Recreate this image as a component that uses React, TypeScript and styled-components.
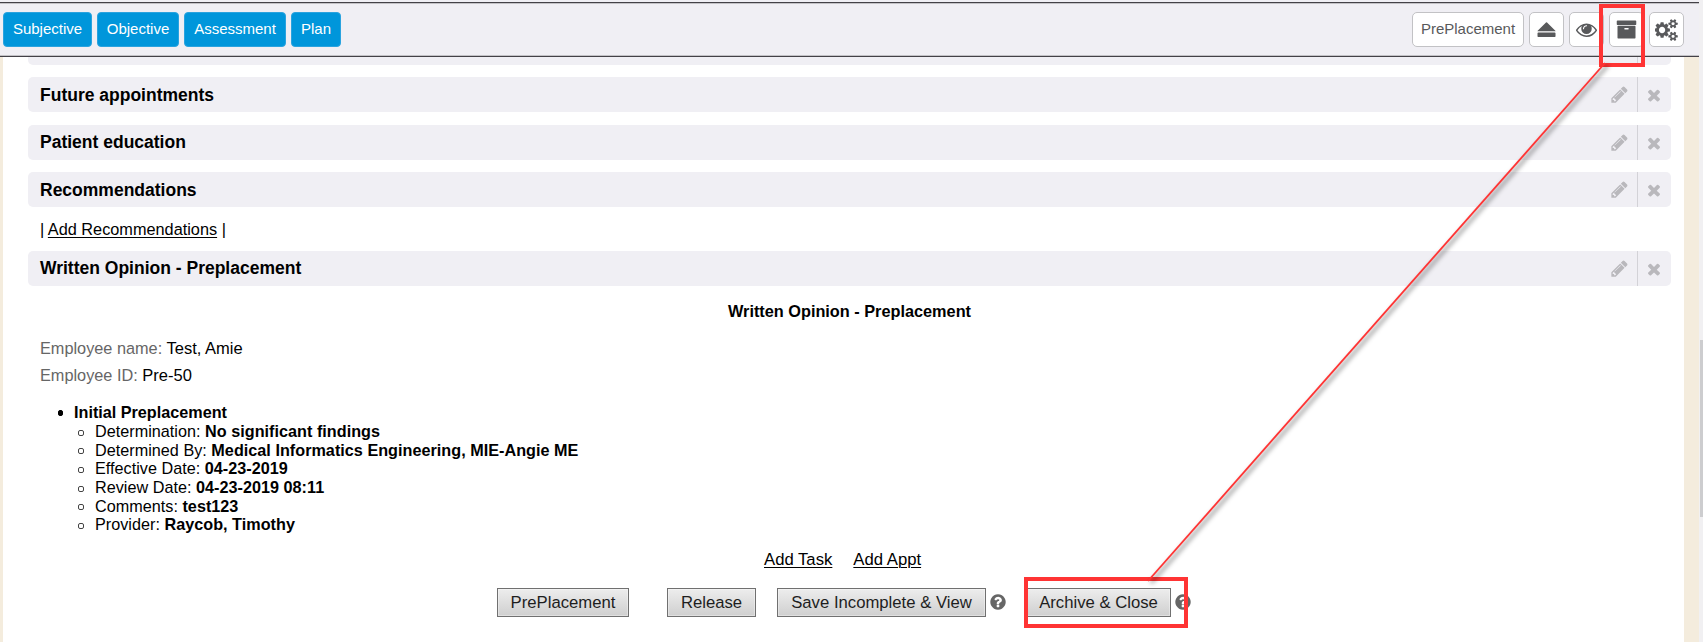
import React from "react";
import styled, { createGlobalStyle, css } from "styled-components";

const GlobalStyle = createGlobalStyle`
  * { box-sizing: border-box; }
  html, body { margin: 0; padding: 0; }
  body {
    font-family: "Liberation Sans", Arial, sans-serif;
    font-size: 16px;
    color: #000;
    background: #fff;
    overflow: hidden;
  }
`;

const Screen = styled.div`
  position: relative;
  display: flex;
  width: 1703px;
  height: 642px;
  overflow: hidden;
  background: #f0eff4;
`;

const Main = styled.div`
  display: flex;
  flex-direction: column;
  width: 1699px;
  height: 642px;
`;

const ScrollTrack = styled.div`
  width: 4px;
  padding: 340px 0 0 1px;
  background: #f1f0f2;
`;

const ScrollThumb = styled.div`
  height: 177px;
  background: #cdcdcf;
`;

const Toolbar = styled.header`
  flex: none;
  display: flex;
  justify-content: space-between;
  align-items: flex-start;
  height: 55px;
  margin-top: 2px;
  padding: 8px 15px 0 3px;
  background: #f0eff4;
  border-top: 1px solid #434147;
  border-bottom: 1px solid #434147;
  box-shadow: inset 0 1px 0 #c3c2c6, inset 0 -1px 0 #c3c2c6;
`;

const ButtonGroup = styled.div`
  display: flex;
  gap: 5px;
  padding-top: 1px;
`;

const NavButton = styled.button<{ $width: number }>`
  width: ${(p) => p.$width}px;
  height: 35px;
  padding: 0 0 2px;
  border: 1px solid #2aa3df;
  border-radius: 4px;
  background: #0096db;
  color: #fff;
  font: 15px "Liberation Sans", Arial, sans-serif;
  white-space: nowrap;
`;

const ToolButton = styled.button<{ $width?: number }>`
  display: flex;
  align-items: center;
  justify-content: center;
  width: ${(p) => p.$width ?? 35}px;
  height: 35px;
  padding: 0;
  border: 1px solid #c2c2c5;
  border-radius: 5px;
  background: #fff;
  color: #58595b;
  font: 15px "Liberation Sans", Arial, sans-serif;

  span { padding-bottom: 2px; }
`;

const Body = styled.main`
  flex: 1;
  min-height: 0;
  padding: 0 13px 0 25px;
  background: #fff;
  border-left: 3px solid #f4ecdd;
  border-right: 15px solid #f4ecdd;
  overflow: hidden;
`;

const SectionBar = styled.section<{ $gap: number; $clipped?: boolean }>`
  display: flex;
  height: 35px;
  margin-top: ${(p) => p.$gap}px;
  border-radius: 5px;
  background: #f0eff4;
  ${(p) => p.$clipped && css`
    height: 8px;
    border-radius: 0 0 5px 5px;
  `}
`;

const SectionTitle = styled.h2<{ $lift?: number }>`
  flex: 1;
  margin: 0;
  padding-left: 12px;
  font-size: 17.5px;
  line-height: ${(p) => 37 - (p.$lift ?? 0)}px;
`;

const SectionAction = styled.div<{ $width: number; $divided?: boolean }>`
  display: flex;
  align-items: center;
  justify-content: center;
  width: ${(p) => p.$width}px;
  padding-right: ${(p) => (p.$divided ? 1 : 0)}px;
  color: #b9b8bc;
  border-left: ${(p) => (p.$divided ? "1px solid #d3d2d7" : "none")};
`;

const Link = styled.a`
  color: #000;
  text-decoration: underline;
  text-underline-offset: 2px;
  text-decoration-thickness: 1px;
`;

const AddLine = styled.div`
  height: 44px;
  padding-left: 12px;
  line-height: 44px;
  font-size: 16.3px;
`;

const DocumentTitle = styled.h3`
  margin: 16px 0 0;
  font-size: 16.3px;
  line-height: 18px;
  text-align: center;
`;

const FieldList = styled.div`
  padding: 15px 0 0 12px;
  font-size: 16.5px;
  line-height: 27px;
`;

const FieldLabel = styled.span`
  color: #666;
  font-size: 16.3px;
`;

const Findings = styled.ul`
  margin: 0;
  padding: 14px 0 0 29px;
  list-style: none;
  font-size: 16.2px;
`;

const Finding = styled.li<{ $nested?: boolean; $height: number }>`
  display: flex;
  align-items: center;
  gap: 11px;
  height: ${(p) => p.$height}px;
  padding-left: ${(p) => (p.$nested ? 22 : 1)}px;
  white-space: pre;

  &::before {
    content: "";
    flex: none;
    width: ${(p) => (p.$nested ? 4 : 3)}px;
    height: 4px;
    margin: ${(p) => (p.$nested ? "2px -1px 0 -1px" : "0")};
    border: 1px solid ${(p) => (p.$nested ? "#444" : "#000")};
    border-radius: 2px;
    background: ${(p) => (p.$nested ? "#fff" : "#000")};
  }
`;

const FindingText = styled.span`
  letter-spacing: 0.02px;
  padding-left: 1px;
`;

const LinkRow = styled.div`
  display: flex;
  gap: 21px;
  padding: 16px 0 0 736px;
  line-height: 20px;
  font-size: 16.7px;
`;

const FormRow = styled.div`
  display: flex;
  align-items: center;
  padding: 18px 0 0 469px;
  color: #666;
`;

const FormButton = styled.button<{ $width: number; $gap?: number }>`
  width: ${(p) => p.$width}px;
  height: 29px;
  margin-left: ${(p) => p.$gap ?? 0}px;
  padding: 1px 0 0;
  border: 1px solid #707070;
  border-radius: 0;
  background: linear-gradient(#ededed, #cfcfcf);
  box-shadow: inset 0 0 0 1px rgba(255, 255, 255, 0.35);
  color: #1e1e1e;
  font: 16.7px "Liberation Sans", Arial, sans-serif;
  white-space: nowrap;
`;

const HelpSlot = styled.span`
  display: flex;
  margin: -2px 0 0 3px;
`;

const Annotation = styled.svg`
  position: absolute;
  top: 0;
  left: 0;
  pointer-events: none;
`;

const iconPaths = {
  pencil:
    "M491 1536l91-91-235-235-91 91v107h128v128h107zm523-928q0-22-22-22-10 0-17 7l-542 542q-7 7-7 17 0 22 22 22 10 0 17-7l542-542q7-7 7-17zm-54-192l416 416-832 832h-416v-416zm683 96q0 53-37 90l-166 166-416-416 166-165q36-38 90-38 53 0 91 38l235 234q37 39 37 91z",
  times:
    "M1490 1322q0 40-28 68l-136 136q-28 28-68 28t-68-28l-294-294-294 294q-28 28-68 28t-68-28l-136-136q-28-28-28-68t28-68l294-294-294-294q-28-28-28-68t28-68l136-136q28-28 68-28t68 28l294 294 294-294q28-28 68-28t68 28l136 136q28 28 28 68t-28 68l-294 294 294 294q28 28 28 68z",
  eject:
    "M142 1003l710-710q19-19 45-19t45 19l710 710q19 19 13 32t-32 13h-1472q-26 0-32-13t13-32zm1459 533h-1408q-26 0-45-19t-19-45v-256q0-26 19-45t45-19h1408q26 0 45 19t19 45v256q0 26-19 45t-45 19z",
  eye:
    "M1664 960q-152-236-381-353 61 104 61 225 0 185-131.500 316.500t-316.500 131.500-316.500-131.500-131.500-316.500q0-121 61-225-229 117-381 353 133 205 333.500 326.500t434.500 121.500 434.500-121.500 333.500-326.500zm-720-384q0-20-14-34t-34-14q-125 0-214.500 89.500t-89.500 214.500q0 20 14 34t34 14 34-14 14-34q0-86 61-147t147-61q20 0 34-14t14-34zm848 384q0 34-20 69-140 230-376.500 368.500t-499.500 138.500-499.500-139-376.500-368q-20-35-20-69t20-69q140-229 376.500-368t499.500-139 499.500 139 376.500 368q20 35 20 69z",
  archive:
    "M1088 832q0-26-19-45t-45-19h-256q-26 0-45 19t-19 45 19 45 45 19h256q26 0 45-19t19-45zm576-192v960q0 26-19 45t-45 19h-1408q-26 0-45-19t-19-45v-960q0-26 19-45t45-19h1408q26 0 45 19t19 45zm64-448v256q0 26-19 45t-45 19h-1536q-26 0-45-19t-19-45v-256q0-26 19-45t45-19h1536q26 0 45 19t19 45z",
  help:
    "M1024 1376v-192q0-14-9-23t-23-9h-192q-14 0-23 9t-9 23v192q0 14 9 23t23 9h192q14 0 23-9t9-23zm256-672q0-88-55.500-163t-138.500-116-170-41q-243 0-371 213-15 24 8 42l132 100q7 6 19 6 16 0 25-12 53-68 86-92 34-24 86-24 48 0 85.500 26t37.500 59q0 38-20 61t-68 45q-63 28-115.500 86.500t-52.500 125.500v36q0 14 9 23t23 9h192q14 0 23-9t9-23q0-19 21.500-49.500t54.500-49.500q32-18 49-28.500t46-35 44.500-48 28-60.500 12.500-81zm384 192q0 209-103 385.500t-279.500 279.500-385.500 103-385.500-103-279.500-279.500-103-385.500 103-385.500 279.500-279.500 385.500-103 385.500 103 279.500 279.500 103 385.500z",
  cogs:
    "M832 896q0-106-75-181t-181-75-181 75-75 181 75 181 181 75 181-75 75-181zm768 512q0-52-38-90t-90-38-90 38-38 90q0 53 37.500 90.500t90.500 37.500 90.500-37.500 37.500-90.500zm0-1024q0-52-38-90t-90-38-90 38-38 90q0 53 37.500 90.500t90.500 37.500 90.500-37.500 37.500-90.500zm-384 421v185q0 10-7 19.500t-16 10.500l-155 24q-11 35-32 76 34 48 90 115 7 11 7 20 0 12-7 19-23 30-82.500 89.500t-78.500 59.500q-11 0-21-7l-115-90q-37 19-77 31-11 108-23 155-7 24-30 24h-186q-11 0-20-7.500t-10-17.500l-23-153q-34-10-75-31l-118 89q-7 7-20 7-11 0-21-8-144-133-144-160 0-9 7-19 10-14 41-53t47-61q-23-44-35-82l-152-24q-10-1-17-9.500t-7-19.500v-185q0-10 7-19.500t16-10.500l155-24q11-35 32-76-34-48-90-115-7-11-7-20 0-12 7-20 22-30 82-89t79-59q11 0 21 7l115 90q34-18 77-32 11-108 23-154 7-24 30-24h186q11 0 20 7.500t10 17.500l23 153q34 10 75 31l118-89q8-7 20-7 11 0 21 8 144 133 144 160 0 8-7 19-12 16-42 54t-45 60q23 48 34 82l152 23q10 2 17 10.500t7 19.500zm640 533v140q0 16-149 31-12 27-30 52 51 113 51 138 0 4-4 7-122 71-124 71-8 0-46-47t-52-68q-20 2-30 2t-30-2q-14 21-52 68t-46 47q-2 0-124-71-4-3-4-7 0-25 51-138-18-25-30-52-149-15-149-31v-140q0-16 149-31 13-29 30-52-51-113-51-138 0-4 4-7 4-2 35-20t59-34 30-16q8 0 46 46.500t52 67.500q20-2 30-2t30 2q51-71 92-112l6-2q4 0 124 70 4 3 4 7 0 25-51 138 17 23 30 52 149 15 149 31zm0-1024v140q0 16-149 31-12 27-30 52 51 113 51 138 0 4-4 7-122 71-124 71-8 0-46-47t-52-68q-20 2-30 2t-30-2q-14 21-52 68t-46 47q-2 0-124-71-4-3-4-7 0-25 51-138-18-25-30-52-149-15-149-31v-140q0-16 149-31 13-29 30-52-51-113-51-138 0-4 4-7 4-2 35-20t59-34 30-16q8 0 46 46.500t52 67.500q20-2 30-2t30 2q51-71 92-112l6-2q4 0 124 70 4 3 4 7 0 25-51 138 17 23 30 52 149 15 149 31z",
};

function Icon({ name, size }: { name: keyof typeof iconPaths; size: number }) {
  const units = name === "cogs" ? 1920 : 1792;
  return (
    <svg width={(size * units) / 1792} height={size} viewBox={`0 0 ${units} 1792`} fill="currentColor" aria-hidden="true">
      <path d={iconPaths[name]} />
    </svg>
  );
}

function Section({ title, gap, lift }: { title: string; gap: number; lift?: number }) {
  return (
    <SectionBar $gap={gap}>
      <SectionTitle $lift={lift}>{title}</SectionTitle>
      <SectionAction $width={36}>
        <Icon name="pencil" size={19} />
      </SectionAction>
      <SectionAction $width={34} $divided>
        <Icon name="times" size={18} />
      </SectionAction>
    </SectionBar>
  );
}

const findings = [
  { label: "Determination: ", value: "No significant findings", height: 19 },
  { label: "Determined By: ", value: "Medical Informatics Engineering, MIE-Angie ME", height: 18 },
  { label: "Effective Date: ", value: "04-23-2019", height: 19 },
  { label: "Review Date: ", value: "04-23-2019 08:11", height: 19 },
  { label: "Comments: ", value: "test123", height: 18 },
  { label: "Provider: ", value: "Raycob, Timothy", height: 19 },
];

export default function App() {
  return (
    <>
      <GlobalStyle />
      <Screen>
        <Main>
          <Toolbar>
            <ButtonGroup>
              <NavButton $width={89}>Subjective</NavButton>
              <NavButton $width={82}>Objective</NavButton>
              <NavButton $width={102}>Assessment</NavButton>
              <NavButton $width={50}>Plan</NavButton>
            </ButtonGroup>
            <ButtonGroup>
              <ToolButton $width={112}><span>PrePlacement</span></ToolButton>
              <ToolButton aria-label="Eject"><Icon name="eject" size={21} /></ToolButton>
              <ToolButton aria-label="Preview"><Icon name="eye" size={21} /></ToolButton>
              <ToolButton aria-label="Archive"><Icon name="archive" size={21} /></ToolButton>
              <ToolButton aria-label="Settings"><Icon name="cogs" size={22} /></ToolButton>
            </ButtonGroup>
          </Toolbar>
          <Body>
            <SectionBar $gap={0} $clipped>
              <SectionTitle />
              <SectionAction $width={34} $divided />
            </SectionBar>
            <Section title="Future appointments" gap={12} />
            <Section title="Patient education" gap={13} lift={2} />
            <Section title="Recommendations" gap={12} />
            <AddLine>
              | <Link>Add Recommendations</Link> |
            </AddLine>
            <Section title="Written Opinion - Preplacement" gap={0} lift={2} />
            <DocumentTitle>Written Opinion - Preplacement</DocumentTitle>
            <FieldList>
              <div><FieldLabel>Employee name:</FieldLabel> Test, Amie</div>
              <div><FieldLabel>Employee ID:</FieldLabel> Pre-50</div>
            </FieldList>
            <Findings>
              <Finding $height={19}><b>Initial Preplacement</b></Finding>
              {findings.map((f) => (
                <Finding key={f.label} $nested $height={f.height}>
                  <FindingText>{f.label}<b>{f.value}</b></FindingText>
                </Finding>
              ))}
            </Findings>
            <LinkRow>
              <Link>Add Task</Link>
              <Link>Add Appt</Link>
            </LinkRow>
            <FormRow>
              <FormButton $width={132}>PrePlacement</FormButton>
              <FormButton $width={89} $gap={38}>Release</FormButton>
              <FormButton $width={209} $gap={21}>Save Incomplete &amp; View</FormButton>
              <HelpSlot><Icon name="help" size={18} /></HelpSlot>
              <FormButton $width={145} $gap={19}>Archive &amp; Close</FormButton>
              <HelpSlot><Icon name="help" size={18} /></HelpSlot>
            </FormRow>
          </Body>
        </Main>
        <ScrollTrack>
          <ScrollThumb />
        </ScrollTrack>
        <Annotation width="1703" height="642" viewBox="0 0 1703 642" fill="none">
          <defs>
            <filter id="lineShadow" x="-5%" y="-5%" width="110%" height="110%">
              <feGaussianBlur stdDeviation="2" />
            </filter>
          </defs>
          <rect x="1601" y="6" width="42" height="59" stroke="#ff3434" strokeWidth="4" />
          <rect x="1026" y="579" width="160" height="47" stroke="#ff3434" strokeWidth="4" />
          <path d="M1608 65L1151 583" stroke="#000" strokeOpacity="0.3" strokeWidth="4" filter="url(#lineShadow)" />
          <path d="M1605 63L1148 581" stroke="#ff3434" strokeWidth="1.800" />
        </Annotation>
      </Screen>
    </>
  );
}
